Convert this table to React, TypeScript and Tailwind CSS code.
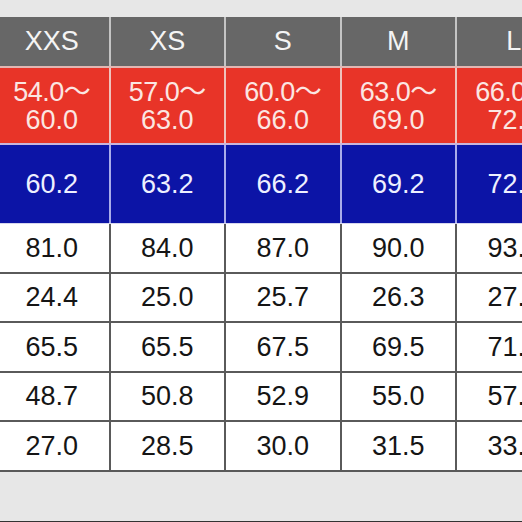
import React from "react";

const sizes = ["XXS", "XS", "S", "M", "L"];
const ranges: [string, string][] = [
  ["54.0～", "60.0"],
  ["57.0～", "63.0"],
  ["60.0～", "66.0"],
  ["63.0～", "69.0"],
  ["66.0～", "72.0"],
];
const blue = ["60.2", "63.2", "66.2", "69.2", "72.2"];
const rows = [
  ["81.0", "84.0", "87.0", "90.0", "93.0"],
  ["24.4", "25.0", "25.7", "26.3", "27.0"],
  ["65.5", "65.5", "67.5", "69.5", "71.5"],
  ["48.7", "50.8", "52.9", "55.0", "57.1"],
  ["27.0", "28.5", "30.0", "31.5", "33.0"],
];

const font = { fontFamily: '"Liberation Sans", "Noto Sans CJK JP", sans-serif' };

export default function App() {
  return (
    <div
      className="w-[522px] h-[522px] bg-[#e7e7e7] overflow-hidden pt-[17px] border-b border-[#333]"
      style={font}
    >
      <div className="ml-[-5px] w-[575.5px] flex flex-col">
        <div className="grid grid-cols-[repeat(5,113.5px)] gap-x-[2px] bg-[#c4c4c4] h-[49px]">
          {sizes.map((s) => (
            <div key={s} className="bg-[#676767] text-[#f4f4f4] text-[27px] flex items-center justify-center">
              {s}
            </div>
          ))}
        </div>
        <div className="h-[2px] bg-[#e2b6b2]" />
        <div className="grid grid-cols-[repeat(5,113.5px)] gap-x-[2px] bg-[#efc2bc] h-[75px]">
          {ranges.map(([a, b]) => (
            <div
              key={a}
              className="bg-[#e83428] text-[#fbe6e2] text-[27px] leading-[28px] flex flex-col items-center justify-center"
            >
              <span className="tracking-[-0.5px]">{a}</span>
              <span>{b}</span>
            </div>
          ))}
        </div>
        <div className="h-[2px] bg-[#c9b6dc]" />
        <div className="grid grid-cols-[repeat(5,113.5px)] gap-x-[2px] bg-[#a9acea] h-[78px]">
          {blue.map((v) => (
            <div key={v} className="bg-[#0c14a6] text-[#eef0ff] text-[27px] flex items-center justify-center">
              {v}
            </div>
          ))}
        </div>
        <div className="h-[1px] bg-[#d6d6ee]" />
        {rows.map((r, i) => (
          <React.Fragment key={i}>
            <div className="grid grid-cols-[repeat(5,113.5px)] gap-x-[2px] bg-[#5a5a5a] h-[47.5px]">
              {r.map((v, j) => (
                <div key={j} className="bg-white text-[#151515] text-[27px] flex items-center justify-center">
                  {v}
                </div>
              ))}
            </div>
            <div className="h-[2px] bg-[#5a5a5a]" />
          </React.Fragment>
        ))}
      </div>
    </div>
  );
}
